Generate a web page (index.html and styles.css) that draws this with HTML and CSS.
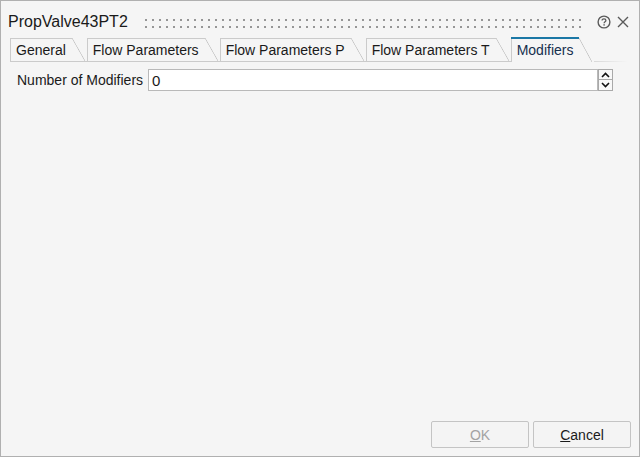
FILE: index.html
```html
<!DOCTYPE html>
<html>
<head>
<meta charset="utf-8">
<link rel="stylesheet" href="styles.css">
</head>
<body>
<div class="window">
  <div class="titlebar">
    <div class="title">PropValve43PT2</div>
    <svg class="grip" height="10" width="440">
      <defs>
        <pattern id="dots" width="7" height="7" patternUnits="userSpaceOnUse">
          <rect width="2" height="2" fill="#969696"/>
        </pattern>
      </defs>
      <rect width="436" height="10" fill="url(#dots)"/>
    </svg>
    <div class="tools">
      <svg class="icon" width="14" height="14" viewBox="0 0 14 14">
        <circle cx="7" cy="7" r="5.9" fill="none" stroke="#5a5a5a" stroke-width="1.4"/>
        <path d="M5.1 5.6 C5.1 4.4 5.9 3.8 7 3.8 C8.1 3.8 8.9 4.4 8.9 5.4 C8.9 6.6 7.1 6.8 7.1 8.2" fill="none" stroke="#5a5a5a" stroke-width="1.3"/>
        <rect x="6.4" y="9.2" width="1.4" height="1.4" fill="#5a5a5a"/>
      </svg>
      <svg class="icon" width="14" height="14" viewBox="0 0 14 14">
        <path d="M2 2 L12 12 M12 2 L2 12" stroke="#5a5a5a" stroke-width="1.4"/>
      </svg>
    </div>
  </div>

  <div class="tabs">
    <div class="tab">General</div>
    <div class="tab">Flow Parameters</div>
    <div class="tab">Flow Parameters P</div>
    <div class="tab">Flow Parameters T</div>
    <div class="tab active">Modifiers</div>
    <div class="tab-fill"></div>
  </div>

  <div class="content">
    <div class="field">
      <label class="label">Number of Modifiers</label>
      <div class="input">0</div>
      <div class="spin">
        <div class="spin-btn">
          <svg width="9" height="6" viewBox="0 0 9 6"><path d="M1 5 L4.5 1.5 L8 5" fill="none" stroke="#111" stroke-width="1.6"/></svg>
        </div>
        <div class="spin-btn">
          <svg width="9" height="6" viewBox="0 0 9 6"><path d="M1 1 L4.5 4.5 L8 1" fill="none" stroke="#111" stroke-width="1.6"/></svg>
        </div>
      </div>
    </div>
  </div>

  <div class="footer">
    <button class="btn disabled"><u>O</u>K</button>
    <button class="btn"><u>C</u>ancel</button>
  </div>
</div>
</body>
</html>
```

FILE: styles.css
```css
* { box-sizing: border-box; }
html, body { margin: 0; padding: 0; }
body {
  font-family: "Liberation Sans", Arial, sans-serif;
  font-size: 14px;
  color: #1a1a1a;
  background: #f5f5f5;
}
.window {
  width: 640px;
  height: 457px;
  border: 1px solid #b0b0b0;
  background: #f5f5f5;
  display: flex;
  flex-direction: column;
}
.titlebar {
  height: 22px;
  margin-top: 10px;
  padding-left: 7px;
  padding-right: 9px;
  display: flex;
  align-items: center;
}
.title {
  width: 137px;
  flex: none;
  font-size: 16px;
  color: #1a1a1a;
  white-space: nowrap;
}
.grip {
  margin-top: 3px;
  flex: none;
}
.tools {
  margin-left: auto;
  display: flex;
  gap: 5px;
  align-items: center;
}
.icon { display: block; }

.tabs {
  margin-top: 4px;
  padding-left: 9px;
  padding-right: 11px;
  display: flex;
  align-items: flex-end;
  height: 25px;
}
.tab {
  position: relative;
  height: 24px;
  padding: 4px 21px 0 5px;
  border-left: 1px solid #cbcbcb;
  border-bottom: 1px solid #cbcbcb;
  white-space: nowrap;
  color: #1a1a1a;
}
.tab::before {
  content: "";
  position: absolute;
  top: 0;
  left: 0;
  right: 15px;
  height: 1px;
  background: #cbcbcb;
}
.tab::after {
  content: "";
  position: absolute;
  top: 0;
  right: 2px;
  width: 13px;
  height: 100%;
  background: linear-gradient(to top right, transparent calc(50% - 0.7px), #c4c4c4 50%, transparent calc(50% + 0.7px));
}
.tab.active {
  height: 25px;
  padding-top: 5px;
  border-bottom: none;
  color: #15304e;
}
.tab.active::before {
  left: -1px;
  height: 2px;
  background: #1b78a6;
}
.tab.active::after {
  top: 1px;
  height: calc(100% - 1px);
}
.tab-fill {
  flex: 1;
  height: 1px;
  background: linear-gradient(to right, #d8d8d8, #f5f5f5);
}

.content {
  padding: 7px 26px 0 16px;
}
.field {
  display: flex;
  align-items: center;
}
.label {
  width: 131px;
  flex: none;
  white-space: nowrap;
}
.input {
  width: 450px;
  height: 22px;
  border: 1px solid #b9b9b9;
  background: #fff;
  padding: 2px 3px 0;
  font-size: 15px;
}
.spin {
  width: 15px;
  height: 22px;
  display: flex;
  flex-direction: column;
}
.spin-btn {
  height: 11px;
  border: 1px solid #a9a9a9;
  background: #f8f8f8;
  display: flex;
  align-items: center;
  justify-content: center;
}
.spin-btn + .spin-btn { border-top: none; }

.footer {
  margin-top: auto;
  display: flex;
  justify-content: flex-end;
  gap: 4px;
  padding: 0 8px 8px 0;
}
.btn {
  width: 98px;
  height: 27px;
  border: 1px solid #c4c4c4;
  border-radius: 2px;
  background: #f4f4f4;
  font-family: "Liberation Sans", Arial, sans-serif;
  font-size: 14px;
  color: #1a1a1a;
  padding: 0;
}
.btn.disabled { color: #a3a3a3; }
```
